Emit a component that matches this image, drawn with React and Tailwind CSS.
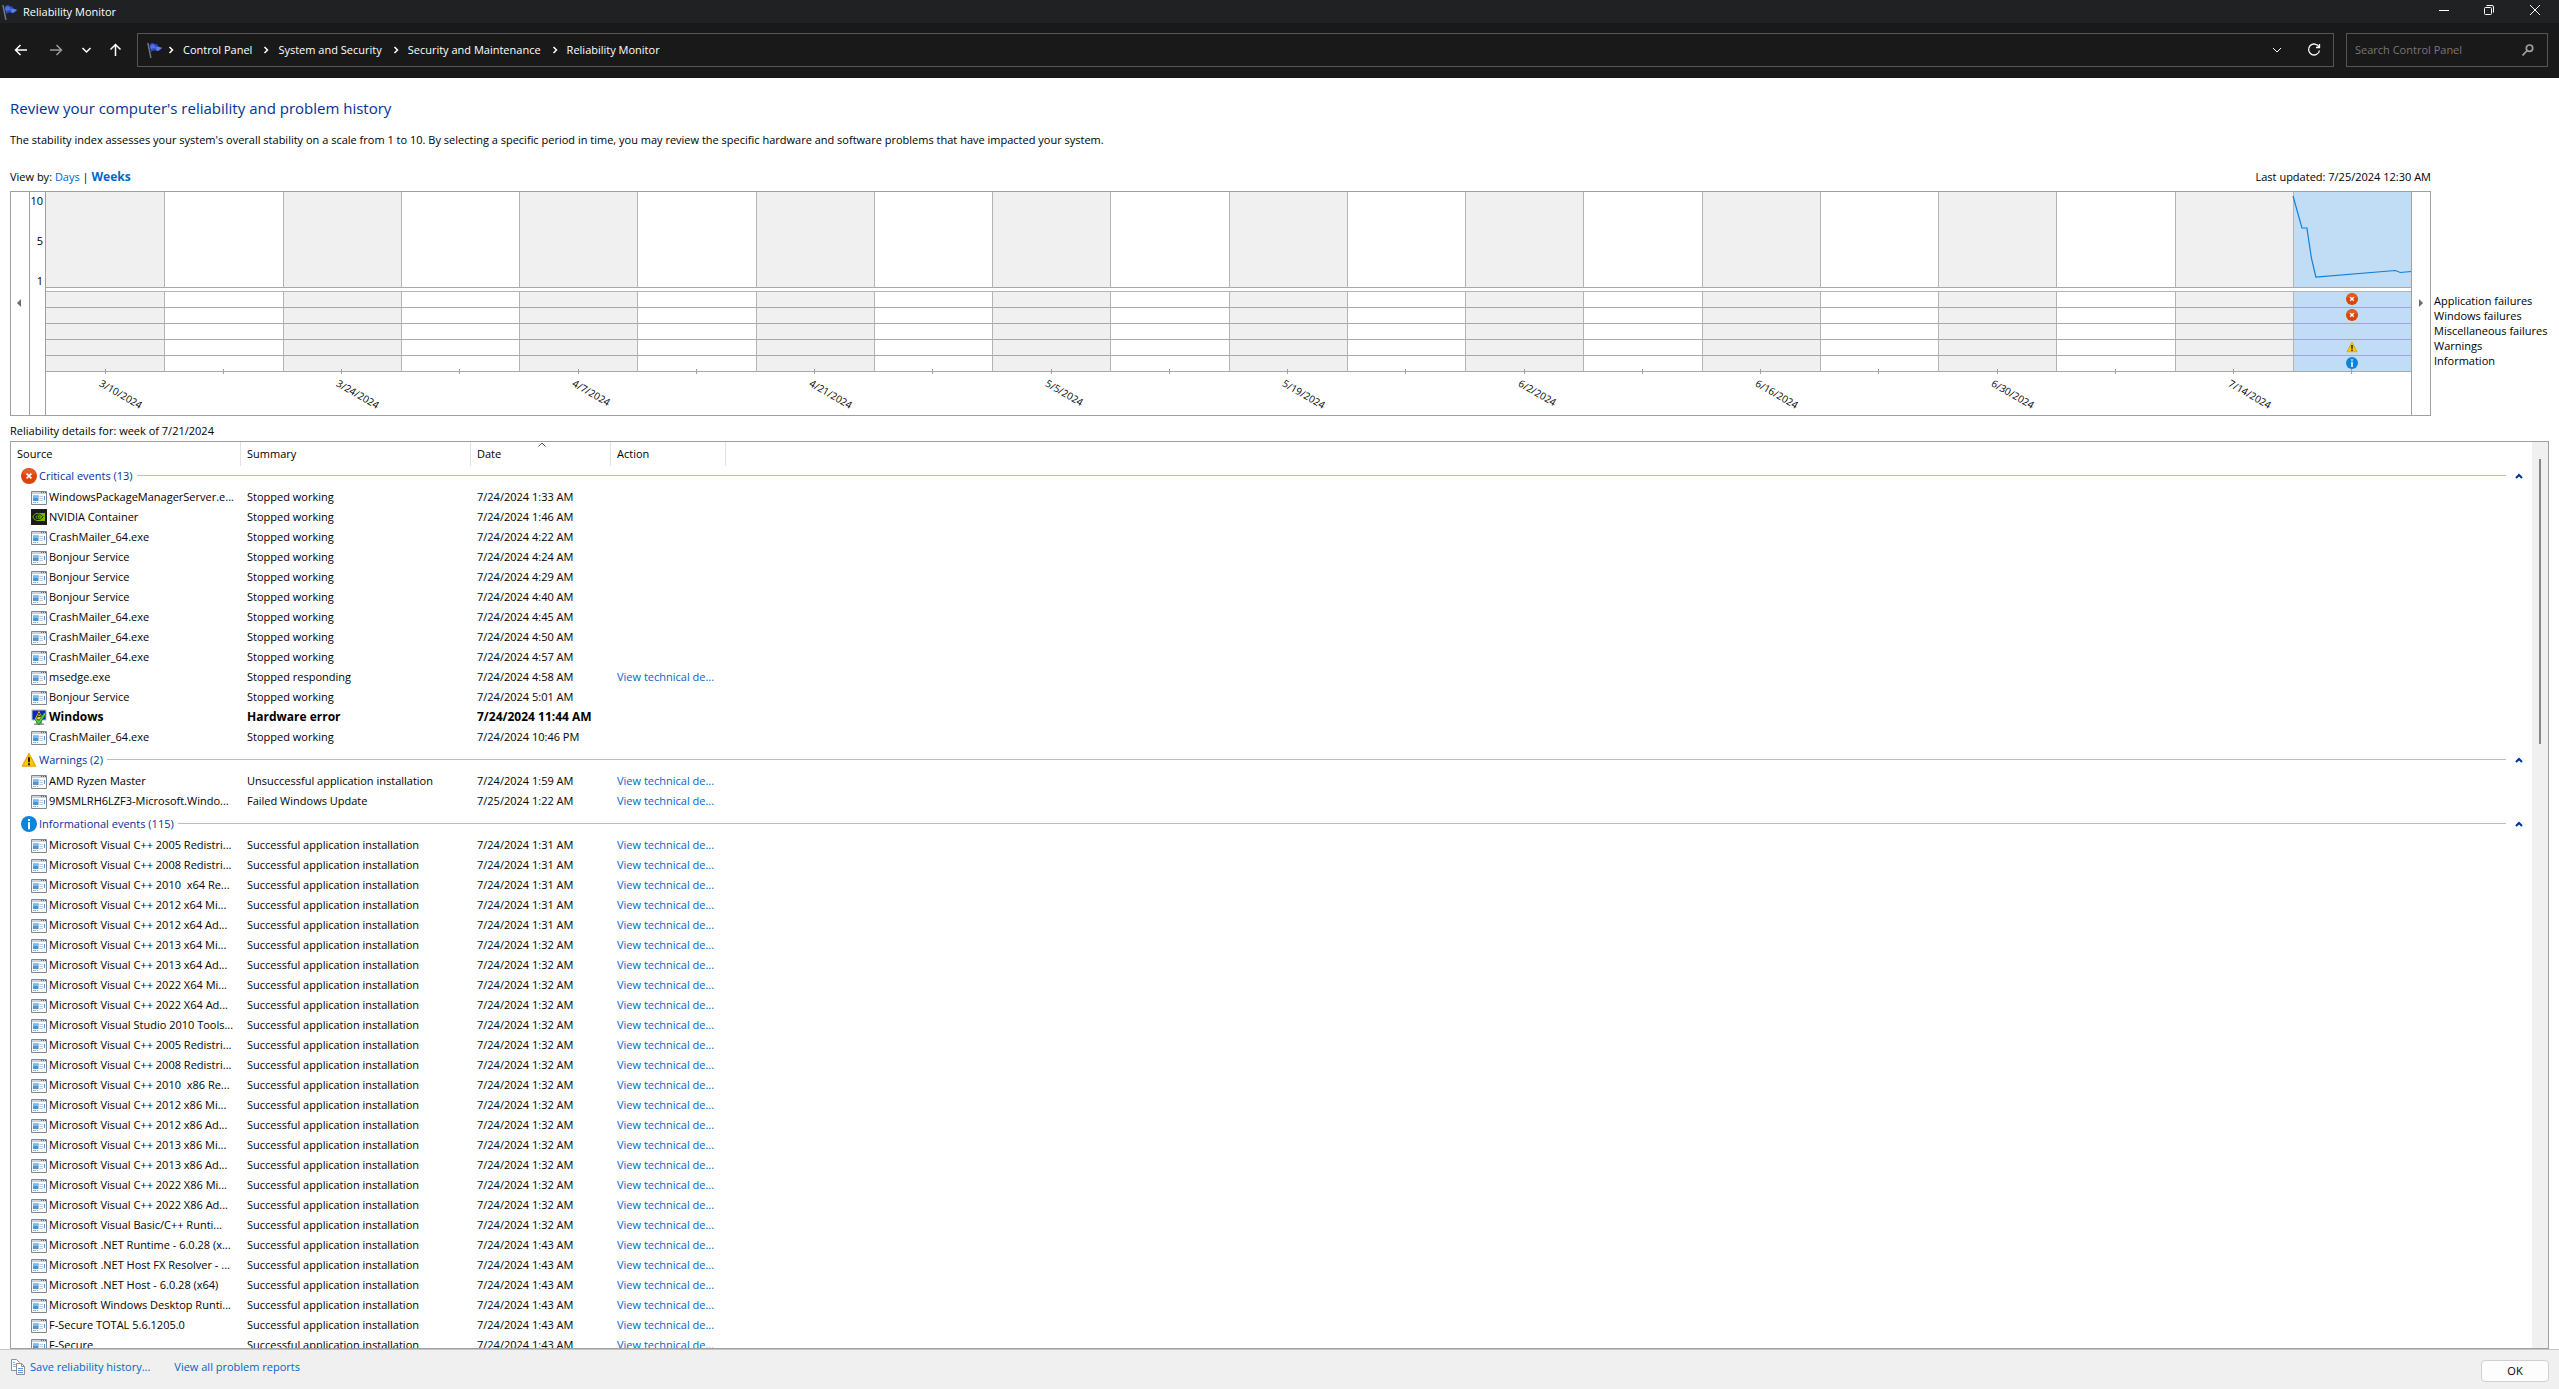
import React, { useState } from 'react';
import { clsx } from 'clsx';

const DATES = ['3/10/2024', '3/24/2024', '4/7/2024', '4/21/2024', '5/5/2024', '5/19/2024', '6/2/2024', '6/16/2024', '6/30/2024', '7/14/2024'];

// every second week carries a date label
const WEEKS = Array.from({ length: 20 }, (_, i) => ({ id: i, label: i % 2 === 0 ? DATES[i / 2] : '' }));

const LEGEND = ['Application failures', 'Windows failures', 'Miscellaneous failures', 'Warnings', 'Information'];
const CURRENT_WEEK = ['error', 'error', null, 'warning', 'info'];

const crash = (source, time, extra) => ({ source, summary: 'Stopped working', date: `7/24/2024 ${time}`, ...extra });
const installed = (source, time) => ({ source, summary: 'Successful application installation', date: `7/24/2024 ${time}`, action: true });

const GROUPS = [
  {
    title: 'Critical events (13)',
    kind: 'error',
    rows: [
      crash('WindowsPackageManagerServer.e...', '1:33 AM'),
      crash('NVIDIA Container', '1:46 AM', { icon: 'nvidia' }),
      crash('CrashMailer_64.exe', '4:22 AM'),
      crash('Bonjour Service', '4:24 AM'),
      crash('Bonjour Service', '4:29 AM'),
      crash('Bonjour Service', '4:40 AM'),
      crash('CrashMailer_64.exe', '4:45 AM'),
      crash('CrashMailer_64.exe', '4:50 AM'),
      crash('CrashMailer_64.exe', '4:57 AM'),
      crash('msedge.exe', '4:58 AM', { summary: 'Stopped responding', action: true }),
      crash('Bonjour Service', '5:01 AM'),
      crash('Windows', '11:44 AM', { summary: 'Hardware error', icon: 'windows', bold: true }),
      crash('CrashMailer_64.exe', '10:46 PM'),
    ],
  },
  {
    title: 'Warnings (2)',
    kind: 'warning',
    rows: [
      { source: 'AMD Ryzen Master', summary: 'Unsuccessful application installation', date: '7/24/2024 1:59 AM', action: true },
      { source: '9MSMLRH6LZF3-Microsoft.Windo...', summary: 'Failed Windows Update', date: '7/25/2024 1:22 AM', action: true },
    ],
  },
  {
    title: 'Informational events (115)',
    kind: 'info',
    rows: [
      installed('Microsoft Visual C++ 2005 Redistri...', '1:31 AM'),
      installed('Microsoft Visual C++ 2008 Redistri...', '1:31 AM'),
      installed('Microsoft Visual C++ 2010  x64 Re...', '1:31 AM'),
      installed('Microsoft Visual C++ 2012 x64 Mi...', '1:31 AM'),
      installed('Microsoft Visual C++ 2012 x64 Ad...', '1:31 AM'),
      installed('Microsoft Visual C++ 2013 x64 Mi...', '1:32 AM'),
      installed('Microsoft Visual C++ 2013 x64 Ad...', '1:32 AM'),
      installed('Microsoft Visual C++ 2022 X64 Mi...', '1:32 AM'),
      installed('Microsoft Visual C++ 2022 X64 Ad...', '1:32 AM'),
      installed('Microsoft Visual Studio 2010 Tools...', '1:32 AM'),
      installed('Microsoft Visual C++ 2005 Redistri...', '1:32 AM'),
      installed('Microsoft Visual C++ 2008 Redistri...', '1:32 AM'),
      installed('Microsoft Visual C++ 2010  x86 Re...', '1:32 AM'),
      installed('Microsoft Visual C++ 2012 x86 Mi...', '1:32 AM'),
      installed('Microsoft Visual C++ 2012 x86 Ad...', '1:32 AM'),
      installed('Microsoft Visual C++ 2013 x86 Mi...', '1:32 AM'),
      installed('Microsoft Visual C++ 2013 x86 Ad...', '1:32 AM'),
      installed('Microsoft Visual C++ 2022 X86 Mi...', '1:32 AM'),
      installed('Microsoft Visual C++ 2022 X86 Ad...', '1:32 AM'),
      installed('Microsoft Visual Basic/C++ Runti...', '1:32 AM'),
      installed('Microsoft .NET Runtime - 6.0.28 (x...', '1:43 AM'),
      installed('Microsoft .NET Host FX Resolver - ...', '1:43 AM'),
      installed('Microsoft .NET Host - 6.0.28 (x64)', '1:43 AM'),
      installed('Microsoft Windows Desktop Runti...', '1:43 AM'),
      installed('F-Secure TOTAL 5.6.1205.0', '1:43 AM'),
      installed('F-Secure', '1:43 AM'),
    ],
  },
];

const FlagIcon = () => (
  <svg width="16" height="16" viewBox="0 0 16 16" className="shrink-0">
    <path d="M1 1.500 3.800 15.4" stroke="#6f7780" strokeWidth="1.5" strokeLinecap="round" />
    <path d="M2.500 3C4 1 5.500.600 7 1.400 8.500 2.200 9 2.600 10.400 2.200L11 4.600 15.500 5.800C13.500 7 12.800 9.400 10 8.800 8 8.400 6 8.400 4.200 10Z" fill="#2a48c4" />
    <path d="M3.200 4C5 2 6.500 2.200 8 3.200L9 6.600C7 6 5.500 6.200 4 7.600Z" fill="#4f72e6" />
    <path d="M10.800 4.600 9 5.200 9.400 8.600C12 9.400 13 7.200 15 6Z" fill="#5b80f0" />
  </svg>
);

const StatusIcon = ({ kind, size = 16, className }) => (
  <svg width={size} height={size} viewBox="0 0 16 16" className={clsx("shrink-0", className)}>
    {kind === 'error' && (
      <>
        <circle cx="8" cy="8" r="8" fill="#dc440d" />
        <path d="M1 5.500A7.500 7.500 0 0 1 15 5.500Q8 8.500 1 5.500Z" fill="#e55a26" />
        <path d="m5.600 5.600 4.800 4.800m0-4.800-4.800 4.800" stroke="#fff" strokeWidth="1.700" />
      </>
    )}
    {kind === 'warning' && (
      <>
        <path d="M8 1.500 14.700 14.200H1.300Z" fill="#fdc70b" stroke="#e3a50a" strokeWidth="1.200" strokeLinejoin="round" />
        <path d="M8 5.200v5M8 11.200v2" stroke="#222" strokeWidth="2" />
      </>
    )}
    {kind === 'info' && (
      <>
        <circle cx="8" cy="8" r="8" fill="#0c84da" />
        <path d="M8 3v2M8 6.200v7" stroke="#fff" strokeWidth="2" />
      </>
    )}
  </svg>
);

const AppIcon = ({ icon }) => {
  if (icon === 'nvidia') {
    return (
      <svg width="16" height="16" viewBox="0 0 16 16" className="shrink-0">
        <path fill="#1b1b1b" d="M0 0h16v16H0z" />
        <path fill="#76b900" d="M6 4h8v8H6z" />
        <path d="M6.500 4.200C4 4.500 2.300 6.500 1.800 8 3 10.500 5 11.600 7 11.600" fill="#1b1b1b" stroke="#76b900" strokeWidth="1" />
        <path d="M6.500 5C9 4.800 11 6.500 12 7.800 10.500 10 8.500 11 6.500 10.500 4.500 9.500 4 8 4.300 7.500 5 6 6.500 6 7.500 6.400 9 7.300 9.200 8 8.500 8.800 7.500 9.500 6.200 8.800 6.300 7.600" fill="none" stroke="#1b1b1b" strokeWidth=".9" />
        <path d="M6 9.800C4.800 8.500 4.800 7 6.300 6.400" fill="none" stroke="#76b900" strokeWidth=".9" />
      </svg>
    );
  }
  if (icon === 'windows') {
    return (
      <svg width="16" height="16" viewBox="0 0 16 16" className="shrink-0">
        <path fill="#b9bdb6" d="M.500.500h15v11H.500z" />
        <path fill="#8f948d" d="M5 12h6v2.500H5zM3 14.500h10V16H3z" />
        <path fill="#0a26c4" d="M1.500 1.500h13v9h-13z" />
        <path d="m8 1.800 4.200 8.200H3.800Z" fill="#f1cf1f" />
        <path d="M5.500 9.500 8 4l2 4M7 7.500h2.500" stroke="#333" fill="none" />
        <path d="m4.800 10 3 4L14 4.500" stroke="#1f7a1f" strokeWidth="2.800" fill="none" />
        <path d="m4.800 10 3 4L14 4.500" stroke="#53d84a" strokeWidth="1.400" fill="none" />
      </svg>
    );
  }
  return (
    <svg width="16" height="16" viewBox="0 0 16 16" className="shrink-0">
      <path d="M.500 2.500h15v13H.500z" fill="#fbfbfb" stroke="#7e8890" />
      <path d="M1 3h14v2H1z" fill="#ccd3da" />
      <path d="M10 3.500h1M12 3.500h1M14 3.500h1" stroke="#4c5966" />
      <path d="M2 6.500h5.500V12H2z" fill="#4f94cf" />
      <path d="M2 6.500h5.500V9H2z" fill="#86b9e2" />
      <path d="M8.500 7.500h3.500M8.500 9.500h3.500M8.500 11.500h3.500" stroke="#c3c9cf" />
      <path d="M13.500 7v4" stroke="#5c96cb" />
      <path d="M2 13.500h3M6 13.500h1" stroke="#a9b2ba" />
    </svg>
  );
};

const Stroke = ({ d, size = 16, width = 1, className }) => (
  <svg width={size} height={size} viewBox={`0 0 ${size} ${size}`} fill="none" stroke="currentColor" strokeWidth={width} className={clsx("shrink-0", className)}>
    <path d={d} />
  </svg>
);

const TitleBar = () => (
  <div className="flex h-[23px] items-center justify-between bg-[#202122] pl-[2px] text-white">
    <div className="flex items-center gap-[5px]">
      <FlagIcon />
      <span>Reliability Monitor</span>
    </div>
    <div className="flex h-full pb-[3px]">
      <button aria-label="Minimize" className="flex w-[45px] items-center justify-center"><Stroke size={10} d="M0 5.500h10" /></button>
      <button aria-label="Restore" className="flex w-[45px] items-center justify-center"><Stroke size={10} d="M2.500.500H8Q9.500.500 9.500 2V7.500M1.500 2.500h5q1 0 1 1v5q0 1-1 1h-5q-1 0-1-1v-5q0-1 1-1Z" /></button>
      <button aria-label="Close" className="flex w-12 items-center justify-center"><Stroke size={10} d="m0 0 10 10M10 0 0 10" /></button>
    </div>
  </div>
);

const CRUMBS = ['Control Panel', 'System and Security', 'Security and Maintenance', 'Reliability Monitor'];

const NavBar = () => (
  <div className="flex h-[55px] items-center bg-[#191919] pr-[11px] pl-[13px] pb-px text-white">
    <button aria-label="Back" className="w-9"><Stroke d="M14 8H2.500M7.500 3l-5 5 5 5" width={1.5} /></button>
    <button aria-label="Forward" className="w-[30px] text-[#9a9a9a]"><Stroke d="M1 8h11.500M7.500 3l5 5-5 5" width={1.5} /></button>
    <button aria-label="Recent locations" className="w-[29px]"><Stroke d="m3.500 6 4 4 4-4" width={1.5} /></button>
    <button aria-label="Up" className="w-[29px]"><Stroke d="M7.500 14V2.500M2.500 7.500l5-5 5 5" width={1.5} /></button>
    <nav aria-label="Address" className="flex h-[34px] flex-1 items-center border border-[#555] pr-[11px] pl-[9px]">
      <FlagIcon />
      {CRUMBS.map((crumb, i) => (
        <React.Fragment key={crumb}>
          <Stroke size={8} d="m2.500 1 3 3-3 3" width={1.5} className={clsx("mr-2", i === 0 ? "ml-1" : "ml-[10px]")} />
          <a href="#" className="whitespace-nowrap">{crumb}</a>
        </React.Fragment>
      ))}
      <button aria-label="Previous locations" className="ml-auto mr-[21px]"><Stroke d="m4 6 4 4 4-4" width={1} /></button>
      <button aria-label="Refresh"><Stroke d="M13 5A5.500 5.500 0 1 0 13.500 8.500M13.500 2v3.500H10" width={1.300} /></button>
    </nav>
    <label className="ml-3 flex h-[34px] w-[202px] items-center border border-[#555] pr-[13px] pl-2">
      <input type="text" aria-label="Search Control Panel" placeholder="Search Control Panel" className="min-w-0 flex-1 bg-transparent outline-none placeholder:text-[#777]" />
      <svg width="12" height="12" viewBox="0 0 12 12" fill="none" stroke="#a0a0a0" strokeWidth="1.700">
        <circle cx="7.500" cy="4.200" r="3.200" />
        <path d="M5.200 6.500.500 11.500" />
      </svg>
    </label>
  </div>
);

const WeekColumn = ({ week, selected, onSelect }) => {
  const border = week.id > 0 && 'border-l border-l-[#b4b4b4]';
  const fill = selected ? 'bg-[#c0ddf5]' : week.id % 2 === 0 ? 'bg-[#f0f0f0]' : 'bg-white';
  return (
    <div className="min-w-0 flex-1" onClick={onSelect}>
      <div className={clsx("h-24 border-b border-b-[#a8a8a8]", border, fill)}>
        {week.id === 19 && (
          <svg className="h-full w-full overflow-visible" viewBox="0 0 118 95" preserveAspectRatio="none">
            <path d="M-1 4 8 36H13L17.500 66 22 85 102 78.500 107 80.500 118 79.500" fill="none" stroke="#0f7fdc" strokeWidth="1.200" />
          </svg>
        )}
      </div>
      <div className="mt-[3px] border-t border-[#b4b4b4]">
        {CURRENT_WEEK.map((kind, i) => (
          <div key={i} className={clsx("flex h-4 items-start justify-center border-b border-b-[#a8a8a8] pt-px", border, fill)}>
            {week.id === 19 && kind && <StatusIcon kind={kind} size={12} />}
          </div>
        ))}
      </div>
      <div className="relative mx-auto -mt-[3px] h-[5px] w-px bg-[#a0a0a0]" />
      {week.label && (
        <div className="ml-[58px] mt-0.5 w-max origin-top-left rotate-30 text-[10px] leading-[15px]">{week.label}</div>
      )}
    </div>
  );
};

const StabilityChart = () => {
  const [selected, setSelected] = useState(19);
  return (
    <div className="flex pl-[10px]">
      <div className="flex h-[225px] flex-1 border border-[#a0a0a0]">
        <button aria-label="Earlier" className="flex w-[19px] items-center justify-center border-r border-[#a0a0a0] pr-0.5 pb-0.5">
          <svg width="4" height="8" viewBox="0 0 4 8"><path d="M4 0v8L0 4Z" fill="#6d6d6d" /></svg>
        </button>
        <div className="flex w-4 flex-col border-r border-[#a0a0a0]">
          <div className="flex h-[97px] flex-col items-end justify-between pt-px pr-0.5 leading-4">
            <span>10</span>
            <span>5</span>
            <span>1</span>
          </div>
        </div>
        <div className="flex flex-1">
          {WEEKS.map((week) => (
            <WeekColumn key={week.id} week={week} selected={selected === week.id} onSelect={() => setSelected(week.id)} />
          ))}
        </div>
        <button aria-label="Later" className="flex w-[19px] items-center justify-center border-l border-[#a0a0a0] pb-0.5">
          <svg width="4" height="8" viewBox="0 0 4 8"><path d="M0 0v8L4 4Z" fill="#6d6d6d" /></svg>
        </button>
      </div>
      <ul className="w-[128px] pt-[102px] pl-[3px] leading-[15px] whitespace-nowrap">
        {LEGEND.map((name) => <li key={name}>{name}</li>)}
      </ul>
    </div>
  );
};

const GroupRows = ({ group, first }) => {
  const [open, setOpen] = useState(true);
  return (
    <tbody>
      <tr>
        <td colSpan={5} className={clsx("p-0 pl-[10px]", !first && "pt-[3px]")}>
          <div className="flex h-[21px] items-center pr-[9px] pb-0.5">
            <StatusIcon kind={group.kind} />
            <span className="ml-0.5 mr-1 text-[#003399]">{group.title}</span>
            <span className="h-px flex-1 bg-[#b0bfde]" />
            <button aria-label="Toggle group" onClick={() => setOpen(!open)} className="ml-[9px] text-[#003399]">
              <Stroke size={8} d="m1 6 3-3 3 3" width={2} />
            </button>
          </div>
        </td>
      </tr>
      {open && group.rows.map((row, i) => (
        <tr key={i} className={clsx("h-5", row.bold && "text-[12px] font-bold")}>
          <td className="p-0 pl-5">
            <div className="flex items-center gap-0.5 whitespace-pre">
              <AppIcon icon={row.icon} />
              {row.source}
            </div>
          </td>
          <td className="p-0 pl-[6px]">{row.summary}</td>
          <td className="p-0 pl-[6px]">{row.date}</td>
          <td className="p-0 pl-[6px]">{row.action && <a href="#" className="text-[#0066cc]">View technical de...</a>}</td>
          <td />
        </tr>
      ))}
    </tbody>
  );
};

const HEAD_CELL = "border-r border-[#e2e2e2] p-0 pl-[6px] text-left font-normal";

const DetailsList = () => (
  <div className="mr-[10px] ml-[10px] flex min-h-0 flex-1 overflow-hidden border border-[#a0a0a0]">
    <div className="min-w-0 flex-1 overflow-hidden">
      <table className="w-full table-fixed border-separate border-spacing-0 leading-4 whitespace-nowrap">
        <colgroup>
          <col className="w-[230px]" />
          <col className="w-[230px]" />
          <col className="w-[140px]" />
          <col className="w-[115px]" />
          <col />
        </colgroup>
        <thead>
          <tr className="h-6">
            <th className={HEAD_CELL}>Source</th>
            <th className={HEAD_CELL}>Summary</th>
            <th className={clsx(HEAD_CELL, "relative")}>
              Date
              <Stroke size={8} d="m.500 4.500 3.500-3.500 3.500 3.500" className="absolute top-0 left-[67px] text-[#555]" />
            </th>
            <th className={HEAD_CELL}>Action</th>
            <th />
          </tr>
        </thead>
        {GROUPS.map((group, i) => <GroupRows key={group.title} group={group} first={i === 0} />)}
      </table>
    </div>
    <div className="flex w-4 justify-center bg-[#f0f0f0] pt-[17px]">
      <div className="h-[285px] w-0.5 bg-[#868686]" />
    </div>
  </div>
);

const Footer = () => (
  <div className="flex h-10 items-center border-t border-[#c4c4c4] bg-[#f0f0f0] pr-[10px] pl-[10px]">
    <svg width="16" height="16" viewBox="0 0 16 16" className="mr-1 mb-[5px]">
      <path d="M1.500.500h5l3 3v8h-8z" fill="#fff" stroke="#8f8f8f" />
      <path d="M3 3.500h2M3 5.500h3M3 7.500h3" stroke="#8fb4e8" />
      <path d="M6.500 4.500h5l3 3v8h-8z" fill="#fff" stroke="#8f8f8f" />
      <path d="M11.500 4.500v3h3" fill="none" stroke="#8f8f8f" />
      <path d="M8 9.500h5M8 11.500h5M8 13.500h5" stroke="#5b93e0" />
    </svg>
    <a href="#" className="mb-[5px] text-[#0066cc]">Save reliability history...</a>
    <a href="#" className="mb-[5px] ml-6 text-[#0066cc]">View all problem reports</a>
    <button className="mt-0.5 ml-auto h-[22px] w-[68px] rounded-[4px] border border-[#d0d0d0] bg-[#fdfdfd]">OK</button>
  </div>
);

export default function App() {
  return (
    <div className="flex h-screen flex-col overflow-hidden bg-white font-['Open_Sans','Noto_Sans',sans-serif] text-[11px] leading-4 text-black">
      <TitleBar />
      <NavBar />
      <div className="px-[10px] pt-[18px]">
        <h1 className="text-[15px] leading-6 text-[#003399]">Review your computer's reliability and problem history</h1>
        <p className="mt-3">The stability index assesses your system's overall stability on a scale from 1 to 10. By selecting a specific period in time, you may review the specific hardware and software problems that have impacted your system.</p>
      </div>
      <div className="mt-[21px] mb-[6px] flex justify-between pr-[128px] pl-[10px]">
        <div>
          View by: <a href="#" className="text-[#0066cc]">Days</a> | <a href="#" className="text-[12px] font-bold text-[#0066cc]">Weeks</a>
        </div>
        <div>Last updated: 7/25/2024 12:30 AM</div>
      </div>
      <StabilityChart />
      <div className="mt-[7px] mb-[2px] pl-[10px]">Reliability details for: week of 7/21/2024</div>
      <DetailsList />
      <Footer />
    </div>
  );
}
